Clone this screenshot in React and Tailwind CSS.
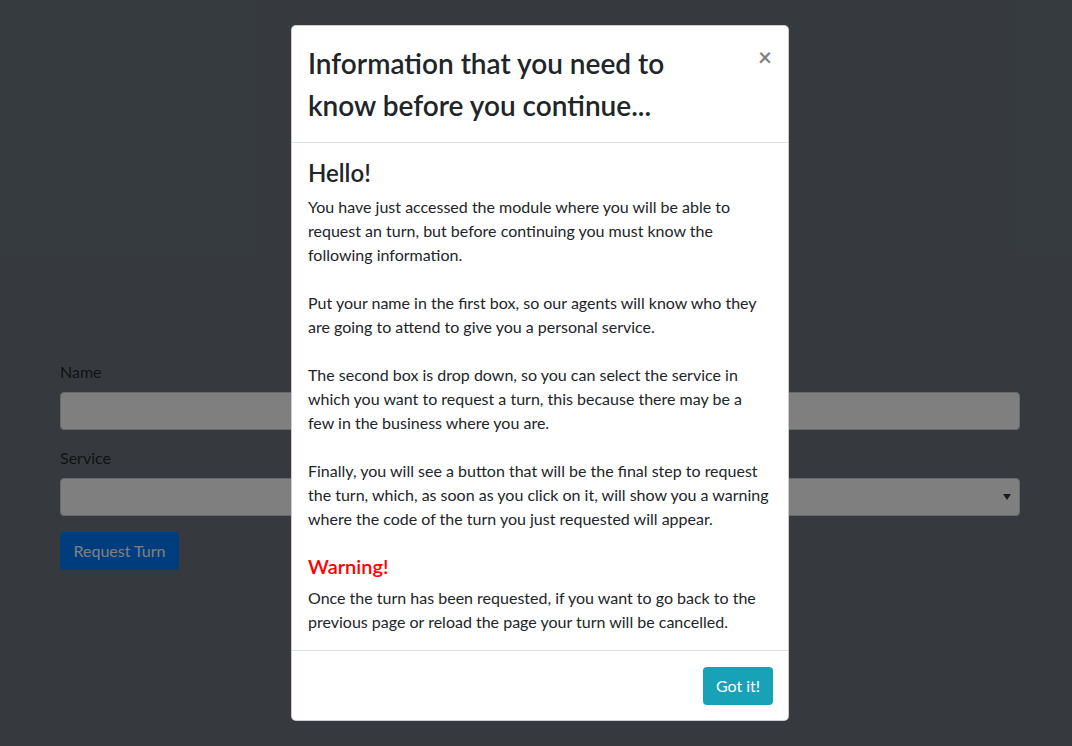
import React from "react";

const font = { fontFamily: "Lato, 'Noto Sans', sans-serif" };

const App = () => {
  return (
    <div className="relative w-[1072px] h-[746px] overflow-hidden bg-[#6c757d]" style={font}>
      {/* page behind the modal */}
      <div className="w-[960px] ml-[60px] pt-[360px] text-[#212529]">
        <div className="mb-4">
          <label className="block mb-2 text-base leading-6">Name</label>
          <input
            type="text"
            className="block w-full h-[38px] bg-white border border-[#ced4da] rounded-[4px]"
          />
        </div>
        <div className="mb-4">
          <label className="block mb-2 text-base leading-6">Service</label>
          <div className="relative w-full h-[38px] bg-white border border-[#ced4da] rounded-[4px]">
            <span className="absolute right-[8px] top-[15px] w-0 h-0 border-l-[4px] border-r-[4px] border-t-[6px] border-l-transparent border-r-transparent border-t-[#343a40]" />
          </div>
        </div>
        <button
          type="button"
          className="h-[38px] w-[119px] bg-[#007bff] text-white text-base rounded-[4px]"
        >
          Request Turn
        </button>
      </div>

      {/* backdrop */}
      <div className="absolute inset-0 bg-black/50" />

      {/* modal */}
      <div className="absolute inset-0 pt-[25px] pl-[291px]">
        <div className="w-[498px] bg-white border border-black/20 rounded-[5px] text-[#212529]">
          <div className="flex items-start justify-between p-4 border-b border-[#dee2e6]">
            <h3 className="text-[28px] leading-[42px] font-semibold">
              Information that you need to
              <br />
              know before you continue...
            </h3>
            <button
              type="button"
              className="mt-[3px] text-[24px] font-bold leading-none text-black/50"
            >
              ×
            </button>
          </div>
          <div className="p-4">
            <h4 className="text-2xl leading-[28px] font-semibold mb-2">Hello!</h4>
            <p className="text-base leading-6">
              You have just accessed the module where you will be able to
              <br />
              request an turn, but before continuing you must know the
              <br />
              following information.
              <br />
              <br />
              Put your name in the first box, so our agents will know who they
              <br />
              are going to attend to give you a personal service.
              <br />
              <br />
              The second box is drop down, so you can select the service in
              <br />
              which you want to request a turn, this because there may be a
              <br />
              few in the business where you are.
              <br />
              <br />
              Finally, you will see a button that will be the final step to request
              <br />
              the turn, which, as soon as you click on it, will show you a warning
              <br />
              where the code of the turn you just requested will appear.
            </p>
            <h5 className="mt-[23px] mb-2 text-xl leading-6 font-semibold text-[#ff0000]">Warning!</h5>
            <p className="text-base leading-6">
              Once the turn has been requested, if you want to go back to the
              <br />
              previous page or reload the page your turn will be cancelled.
            </p>
          </div>
          <div className="flex justify-end pt-4 pb-[15px] pl-4 pr-[15px] border-t border-[#dee2e6]">
            <button
              type="button"
              className="h-[38px] w-[70px] bg-[#17a2b8] text-white text-base rounded-[4px]"
            >
              Got it!
            </button>
          </div>
        </div>
      </div>
    </div>
  );
};

export default App;
